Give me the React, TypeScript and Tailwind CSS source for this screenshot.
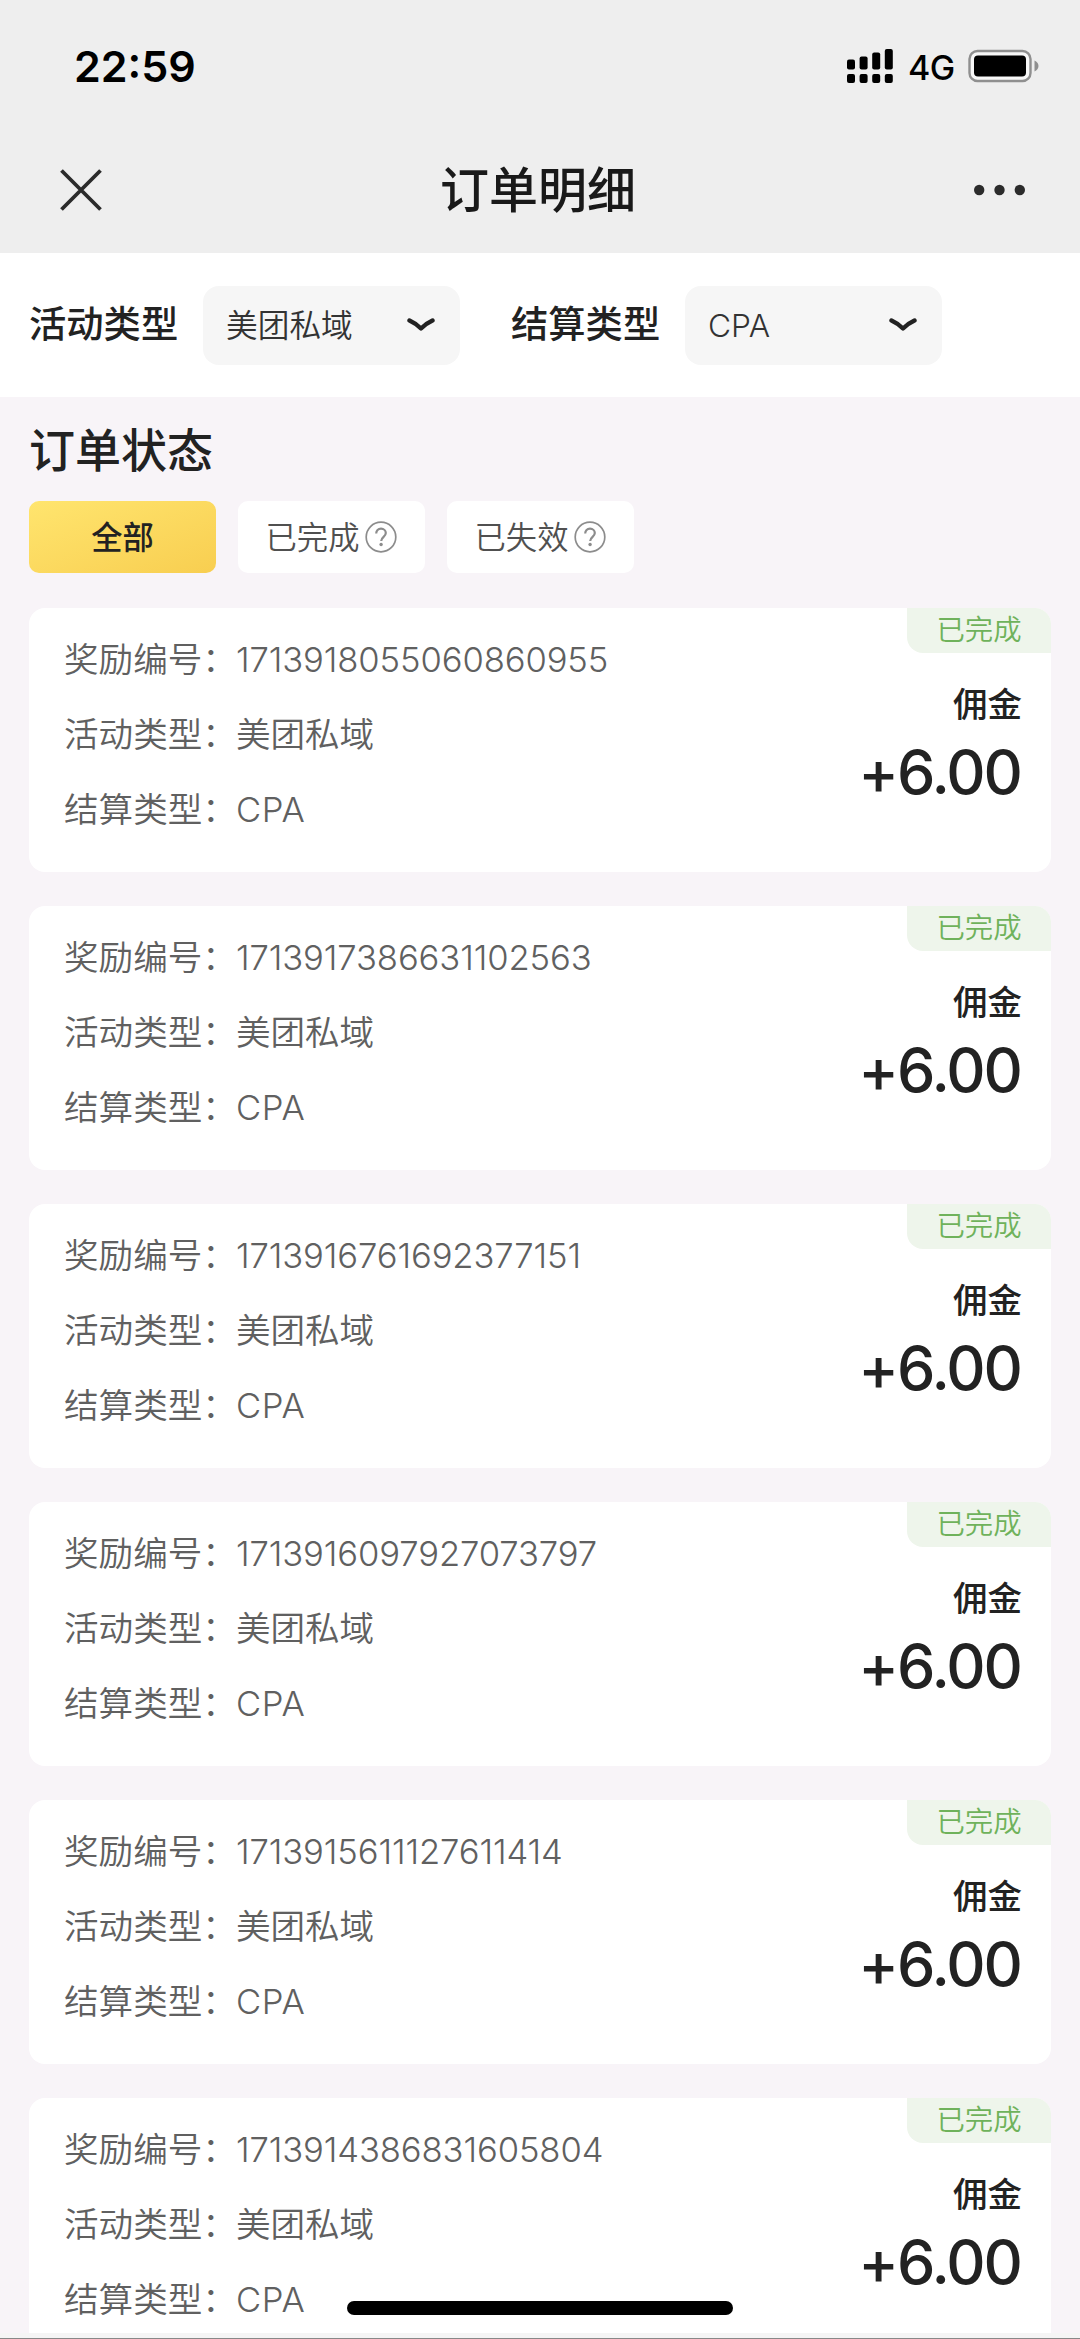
import React, { useState } from 'react';

interface Order {
  id: string;
  activity: string;
  settlement: string;
  amount: string;
}

const orders: Order[] = [
  { id: '1713918055060860955', activity: '美团私域', settlement: 'CPA', amount: '+6.00' },
  { id: '1713917386631102563', activity: '美团私域', settlement: 'CPA', amount: '+6.00' },
  { id: '1713916761692377151', activity: '美团私域', settlement: 'CPA', amount: '+6.00' },
  { id: '1713916097927073797', activity: '美团私域', settlement: 'CPA', amount: '+6.00' },
  { id: '1713915611127611414', activity: '美团私域', settlement: 'CPA', amount: '+6.00' },
  { id: '1713914386831605804', activity: '美团私域', settlement: 'CPA', amount: '+6.00' },
];

const tabs = [
  { key: 'all', label: '全部', help: false },
  { key: 'done', label: '已完成', help: true },
  { key: 'invalid', label: '已失效', help: true },
];

function StatusBar() {
  return (
    <div className="flex h-[132px] items-center justify-between pl-[74px] pr-[41px]">
      <span className="text-[43px] font-semibold leading-none text-black">22:59</span>
      <div className="flex items-center">
        <svg width="46" height="34" viewBox="0 0 46 34" fill="#000">
          <rect x="0" y="10.5" width="8" height="10" rx="2" />
          <rect x="12.6" y="7.5" width="8" height="13" rx="2" />
          <rect x="25.2" y="3.5" width="8" height="17" rx="2" />
          <rect x="37.8" y="0" width="8" height="20.5" rx="2" />
          <rect x="0" y="25" width="8" height="9" rx="2" />
          <rect x="12.6" y="25" width="8" height="9" rx="2" />
          <rect x="25.2" y="25" width="8" height="9" rx="2" />
          <rect x="37.8" y="25" width="8" height="9" rx="2" />
        </svg>
        <span className="ml-[15px] w-[60px] pt-[3px] text-[34px] font-medium leading-none tracking-[-0.5px] text-black">4G</span>
        <svg width="71" height="34" viewBox="0 0 71 34">
          <rect x="1.5" y="2" width="61" height="30" rx="8" fill="#fff" fillOpacity="0.5" stroke="#8f8f8f" strokeWidth="2.4" />
          <rect x="6" y="6.5" width="52" height="21" rx="4" fill="#000" />
          <path d="M66.5 11.5c2.4 1 4 3 4 5.5s-1.6 4.5-4 5.5z" fill="#8f8f8f" />
        </svg>
      </div>
    </div>
  );
}

function NavBar() {
  return (
    <div className="flex h-[121px] items-center justify-between pb-[5px] pl-[60px] pr-[55px]">
      <svg width="42" height="42" viewBox="0 0 42 42" stroke="#2b2b2b" strokeWidth="3.8">
        <path d="M1.5 1.5l39 39M40.5 1.5l-39 39" />
      </svg>
      <h1 className="text-[49px] font-medium leading-none text-[#191919]">订单明细</h1>
      <svg width="51" height="12" viewBox="0 0 51 12" fill="#2b2b2b">
        <circle cx="5.2" cy="6" r="5.2" />
        <circle cx="25.5" cy="6" r="5.2" />
        <circle cx="45.8" cy="6" r="5.2" />
      </svg>
    </div>
  );
}

function Filter({ label, value }: { label: string; value: string }) {
  return (
    <div className="flex items-center">
      <span className="w-[174px] whitespace-nowrap text-[37.3px] font-medium leading-none text-[#222]">{label}</span>
      <button type="button" className="flex h-[79px] w-[257px] items-center justify-between rounded-2xl bg-[#f6f6f6] pl-[23px] pr-[25px]">
        <span className="pt-[2px] text-[31.7px] font-[350] leading-none text-[#333]">{value}</span>
        <svg width="28" height="14" viewBox="0 0 28 14" fill="none" stroke="#222" strokeWidth="4.4" strokeLinecap="round" strokeLinejoin="round">
          <path d="M2.5 2.5C7 4.5 11 7.5 14 10.5c3-3 7-6 11.5-8" />
        </svg>
      </button>
    </div>
  );
}

function HelpIcon() {
  return (
    <svg className="ml-[6px]" width="32" height="32" viewBox="0 0 32 32" fill="none" stroke="#8c8c8c">
      <circle cx="16" cy="16" r="14.8" strokeWidth="1.7" />
      <path d="M11.2 12.6c0-3 2-4.9 4.8-4.9s4.8 1.9 4.8 4.4c0 3.7-4.6 3.9-4.6 8" strokeWidth="2.2" />
      <circle cx="16.1" cy="23.5" r="1.7" fill="#8c8c8c" stroke="none" />
    </svg>
  );
}

function Row({ label, value }: { label: string; value: string }) {
  return (
    <div className="flex h-[75px] items-center whitespace-nowrap text-[34.6px] font-[350] leading-none text-[#606060]">
      <span className="w-[172px]">{label}：</span>
      <span className={/[a-z]/i.test(value) ? 'tracking-[0.6px]' : 'tracking-[-0.1px]'}>{value}</span>
    </div>
  );
}

function OrderCard({ order }: { order: Order }) {
  return (
    <div className="flex h-[264px] shrink-0 justify-between overflow-hidden rounded-2xl bg-white">
      <div className="pl-[35px] pt-[14px]">
        <Row label="奖励编号" value={order.id} />
        <Row label="活动类型" value={order.activity} />
        <Row label="结算类型" value={order.settlement} />
      </div>
      <div className="flex flex-col items-end">
        <div className="flex h-[45px] w-[144px] items-center justify-center rounded-bl-2xl bg-[#eef5eb] text-[28.4px] font-[350] leading-none text-[#6fb25b]">已完成</div>
        <div className="mr-[29px] mt-[35px] text-[34.5px] font-medium leading-none text-[#222]">佣金</div>
        <div className="mr-[30px] mt-[19px] text-[61px] font-medium leading-none tracking-[-2px] text-[#222]">{order.amount}</div>
      </div>
    </div>
  );
}

export default function App() {
  const [active, setActive] = useState('all');

  return (
    <div className="relative flex h-[2339px] w-[1080px] flex-col overflow-hidden bg-[#f8f4f8] font-[Inter,'Noto_Sans_CJK_SC',sans-serif]">
      <header className="shrink-0 bg-[#eee]">
        <StatusBar />
        <NavBar />
      </header>

      <div className="flex h-[144px] shrink-0 items-center gap-[51px] bg-white pl-[29px]">
        <Filter label="活动类型" value="美团私域" />
        <Filter label="结算类型" value="CPA" />
      </div>

      <main className="flex min-h-0 flex-1 flex-col overflow-hidden px-[29px] pt-[30px]">
        <h2 className="text-[46px] font-medium leading-[46px] text-[#222]">订单状态</h2>
        <div className="mt-[28px] flex shrink-0 gap-[22px]">
          {tabs.map((t) => (
            <button
              key={t.key}
              type="button"
              onClick={() => setActive(t.key)}
              className={`flex h-[72px] w-[187px] items-center justify-center rounded-[10px] text-[31.3px] leading-none ${
                active === t.key ? 'bg-linear-to-br from-[#ffe56e] to-[#f8ce50] font-medium text-[#222]' : 'bg-white font-[350] text-[#505050]'
              }`}
            >
              <span className="pt-[3px]">{t.label}</span>
              {t.help && <HelpIcon />}
            </button>
          ))}
        </div>

        <div className="mt-[35px] flex flex-col gap-[34px]">
          {orders.map((order) => (
            <OrderCard key={order.id} order={order} />
          ))}
        </div>
      </main>

      <div className="h-[6px] shrink-0 border-b border-[#888] bg-[#f5f5f5]" />

      {/* home indicator */}
      <div className="absolute bottom-[24px] left-[347px] h-[14px] w-[386px] rounded-full bg-black" />
    </div>
  );
}
